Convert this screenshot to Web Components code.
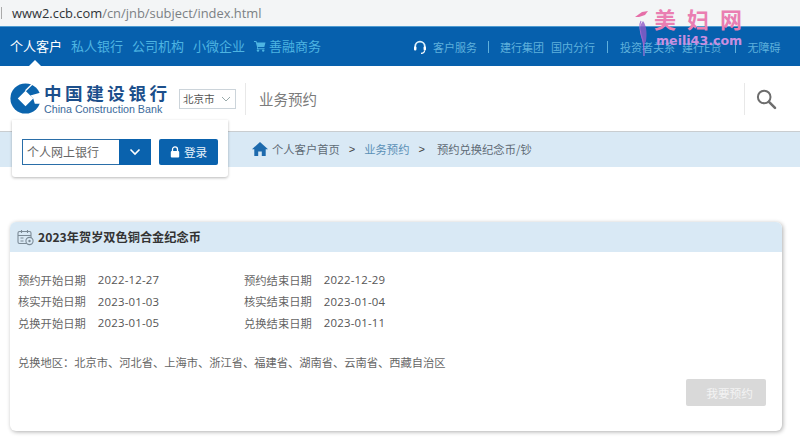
<!DOCTYPE html>
<html lang="zh"><head><meta charset="utf-8"><title>业务预约</title>
<style>
html,body{margin:0;padding:0;background:#fff}
body{width:800px;height:440px;overflow:hidden;position:relative;font-family:"Noto Sans CJK SC","Open Sans",sans-serif;font-size:12px;color:#555}
</style></head><body>
<url-bar>www2.ccb.com</url-bar>
<top-nav></top-nav>
<site-header></site-header>
<bread-crumb></bread-crumb>
<login-box></login-box>
<coin-card></coin-card>
<water-mark></water-mark>
<script>
const def=(name,html)=>customElements.define(name,class extends HTMLElement{constructor(){super();this.attachShadow({mode:'open'}).innerHTML=html}});
const F='"Noto Sans CJK SC",sans-serif';
def('url-bar',`<style>:host{display:flex;align-items:center;height:26px;box-sizing:border-box;background:#f3f5f6;padding-left:1px;font:12.9px "Open Sans","Liberation Sans",sans-serif;color:#7b8084;white-space:nowrap}
i{width:1px;height:12px;background:#aaa;margin-right:10px}b{font-weight:400;color:#2f3336}</style><i></i><b><slot></slot></b>/cn/jnb/subject/index.html`);
def('top-nav',`<style>:host{display:flex;align-items:center;height:40px;background:#0660ad;border-top:1px solid #4f9bd0;box-sizing:border-box;padding:0 0 2px 10px;font:13px ${F};color:#4db4e2;white-space:nowrap;position:relative}
.m{display:flex;gap:9px;align-items:center}.a{color:#fff}
.r{position:absolute;left:413px;top:11px;display:flex;align-items:center;font-size:11px;color:#5fb0dc;height:18px}
.s{width:1px;height:12px;background:#5fb0dc;margin:0 11px}
.tri{position:absolute;left:29px;bottom:0;width:0;height:0;border:6px solid transparent;border-top:0;border-bottom-color:#fff}
svg{display:block}</style>
<div class="m"><span class="a">个人客户</span><span>私人银行</span><span>公司机构</span><span>小微企业</span>
<span style="display:flex;align-items:center;gap:3px"><svg width="12" height="12" viewBox="0 0 12 12"><path d="M0 1h2.4l.5 1.5h8.6l-1.2 4.6H3.8L4 8.2h6.6v1H2.8l.3-2L1.7 2H0z" fill="#4db4e2"/><circle cx="4" cy="10.6" r="1.2" fill="#4db4e2"/><circle cx="9.2" cy="10.6" r="1.2" fill="#4db4e2"/></svg>善融商务</span></div>
<div class="r"><svg width="14" height="15" viewBox="0 0 14 15" style="margin-right:6px"><path d="M2.2 9V6.5a4.8 4.8 0 0 1 9.6 0V9" fill="none" stroke="#dff1fb" stroke-width="1.8"/><rect x="1" y="6.5" width="2.4" height="4" rx="1" fill="#fff"/><rect x="10.6" y="6.5" width="2.4" height="4" rx="1" fill="#fff"/><path d="M11.5 10.5c0 2-1.8 2.8-3.5 2.8" fill="none" stroke="#fff" stroke-width="1.2"/></svg>
<span>客户服务</span><i class="s"></i><span>建行集团</span><span style="margin-left:7px">国内分行</span><i class="s" style="margin-left:12px;margin-right:12px"></i><span>投资者关系</span><span style="margin-left:7px">建行E贷</span><i class="s" style="margin-left:14px"></i><span>无障碍</span></div>
<div class="tri"></div>`);
def('site-header',`<style>:host{display:flex;align-items:center;height:66px;box-sizing:border-box;background:#fff;border-bottom:1px solid #c9cdd0;position:relative;padding-left:10px;white-space:nowrap}
svg{display:block;flex:none}
.logo{margin-left:3px;width:130px}
.cn{font:700 17.6px/18px ${F};letter-spacing:3.5px;color:#1c4f8b}
.en{font:10.7px/10px "Liberation Sans",sans-serif;color:#3b6a9b;margin-top:2px}
.sel{margin-left:5px;width:57px;height:20px;box-sizing:border-box;border:1px solid #ccd4da;font:10.5px/18px ${F};color:#555;padding-left:3px;display:flex;align-items:center;justify-content:space-between;padding-right:4px}
.div{width:1px;height:32px;background:#e8e8e8;margin:0 13px 0 9px}
.t{font:14.5px ${F};color:#7b7b7b}
.sr{margin-left:auto;width:56px;height:32px;border-left:1px solid #e8e8e8;display:flex;align-items:center;padding-left:10px;box-sizing:border-box}</style>
<svg width="31" height="31" viewBox="0 0 30 30"><circle cx="15" cy="15" r="14.6" fill="#0b64ad"/><path d="M15 7.5 22.5 15 15 22.5 7.5 15z" fill="#fff"/><path d="M22.5 15 19.6 12 30.5 9 31 20 24 20z" fill="#fff"/><path d="M15 7.5 22.5 0" stroke="#fff" stroke-width="1.3"/></svg>
<div class="logo"><div class="cn">中国建设银行</div><div class="en">China Construction Bank</div></div>
<div class="sel">北京市<svg width="10" height="6" viewBox="0 0 10 6"><path d="M1 1l4 4 4-4" fill="none" stroke="#9aa" stroke-width="1"/></svg></div>
<i class="div"></i><span class="t">业务预约</span>
<div class="sr"><svg width="22" height="22" viewBox="0 0 22 22"><circle cx="9.2" cy="9" r="6.3" fill="none" stroke="#6d6d6d" stroke-width="2"/><path d="M14 13.8l6 6" stroke="#6d6d6d" stroke-width="2.6" stroke-linecap="round"/></svg></div>`);
def('bread-crumb',`<style>:host{display:flex;align-items:center;height:35px;background:#d9e9f5;padding:0 0 2px 252px;box-sizing:border-box;font:11.3px ${F};color:#5f6b75;white-space:nowrap}
span{display:block}.g{margin:0 9px;font:11px "Liberation Sans",sans-serif;color:#444}.l{color:#5a8fb5}</style>
<svg width="16" height="14" viewBox="0 0 16 14" style="margin-right:4px"><path d="M8 0 16 7.2h-2.3V14H9.8V9.5H6.2V14H2.3V7.2H0z" fill="#1d6aad"/></svg>
<span>个人客户首页</span><span class="g">&gt;</span><span class="l">业务预约</span><span class="g" style="margin-right:12px">&gt;</span><span>预约兑换纪念币/钞</span>`);
def('login-box',`<style>:host{position:absolute;left:12px;top:120px;width:216px;height:57px;box-sizing:border-box;background:#fff;box-shadow:0 1px 3px rgba(0,0,0,.28);border-radius:0 0 3px 3px;display:flex;align-items:center;padding:6px 0 0 10px}
.i{width:97px;height:26px;box-sizing:border-box;border:1px solid #2a6ea8;border-right:0;font:12px/24px ${F};color:#666;padding-left:4px}
.b{width:32px;height:26px;background:#0a62ad;display:flex;align-items:center;justify-content:center}
.l{margin-left:8px;width:59px;height:26px;background:#0a62ad;border-radius:2px;color:#e8f3fb;font:11.6px ${F};display:flex;align-items:center;justify-content:center;gap:4px}</style>
<div class="i">个人网上银行</div><div class="b"><svg width="12" height="8" viewBox="0 0 12 8"><path d="M1.5 1.5 6 6l4.5-4.5" fill="none" stroke="#fff" stroke-width="1.6"/></svg></div>
<div class="l"><svg width="10" height="12" viewBox="0 0 10 12"><path d="M2.5 5V3.4a2.5 2.5 0 0 1 5 0V5" fill="none" stroke="#fff" stroke-width="1.3"/><rect x="0.8" y="5" width="8.4" height="6.6" rx="1" fill="#fff"/></svg>登录</div>`);
def('coin-card',`<style>:host{display:block;margin:55px 0 0 10px;width:772px;height:209px;box-sizing:border-box;background:#fff;border-radius:6px;box-shadow:1px 1px 4px rgba(0,0,0,.32);overflow:hidden;font:11.3px ${F};color:#666;white-space:nowrap}
.h{height:30px;background:#d9e9f5;display:flex;align-items:center;padding-left:7px;gap:3px;font:700 12.2px ${F};color:#333}
.g{display:grid;grid-template-columns:226px 1fr;padding:17px 0 0 8px}
.c{display:flex;height:21.5px;align-items:center}.c b{font:400 11.4px "Open Sans",sans-serif;color:#555;margin-left:12px;letter-spacing:.2px}
.a{margin:20.5px 0 0 8px;height:16px;line-height:16px;font-size:11.25px}
.f{display:flex;justify-content:flex-end;padding:9px 16px 0 0}
.btn{width:80px;height:27px;background:#d9d9d9;border-radius:2px;color:#f3f3f3;font:11.7px/27px ${F};text-align:right;padding-right:13px;box-sizing:border-box}</style>
<div class="h"><svg width="18" height="17" viewBox="0 0 18 17"><rect x="1" y="2.5" width="13" height="12" rx="1.5" fill="none" stroke="#7b8a96" stroke-width="1.1"/><path d="M1 6.5h13M4.5 1v3M10.5 1v3M3.5 9h3M3.5 12h3" stroke="#7b8a96" stroke-width="1.1" fill="none"/><circle cx="12.5" cy="12" r="3.6" fill="#d9e9f5" stroke="#7b8a96" stroke-width="1.1"/><circle cx="12.5" cy="12" r="1.2" fill="#7b8a96"/></svg><span>2023年贺岁双色铜合金纪念币</span></div>
<div class="g">
<div class="c">预约开始日期<b>2022-12-27</b></div><div class="c">预约结束日期<b>2022-12-29</b></div>
<div class="c">核实开始日期<b>2023-01-03</b></div><div class="c">核实结束日期<b>2023-01-04</b></div>
<div class="c">兑换开始日期<b>2023-01-05</b></div><div class="c">兑换结束日期<b>2023-01-11</b></div>
</div>
<div class="a">兑换地区：北京市、河北省、上海市、浙江省、福建省、湖南省、云南省、西藏自治区</div>
<div class="f"><div class="btn">我要预约</div></div>`);
def('water-mark',`<style>:host{position:absolute;left:632px;top:6px;width:150px;height:52px;font-family:${F};pointer-events:none}
.t{position:absolute;left:22px;top:2px;font:700 22px/20px "Noto Sans CJK SC",sans-serif;letter-spacing:11px;color:#ea7eb2;white-space:nowrap}
.u{position:absolute;left:24px;top:27px;font:700 12.6px/16px "DejaVu Sans",sans-serif;color:#c98fe0;white-space:nowrap}
svg{position:absolute;left:2px;top:3px}</style>
<svg width="20" height="50" viewBox="0 0 20 50"><path d="M1 8 8 3l6-1-3 4-6 2z" fill="#e56fa8"/><path d="M7 12c-3 5 0 14 2 20 1 4 1 9 1 15" fill="none" stroke="#a974d6" stroke-width="1.2"/><path d="M9 12c4 5 4 14 3 20l-2 5c-2-8-5-14-3-22z" fill="#8e5bc7" opacity=".8"/></svg>
<div class="t">美妇网</div><div class="u">meili43.com</div>`);
</script></body></html>
